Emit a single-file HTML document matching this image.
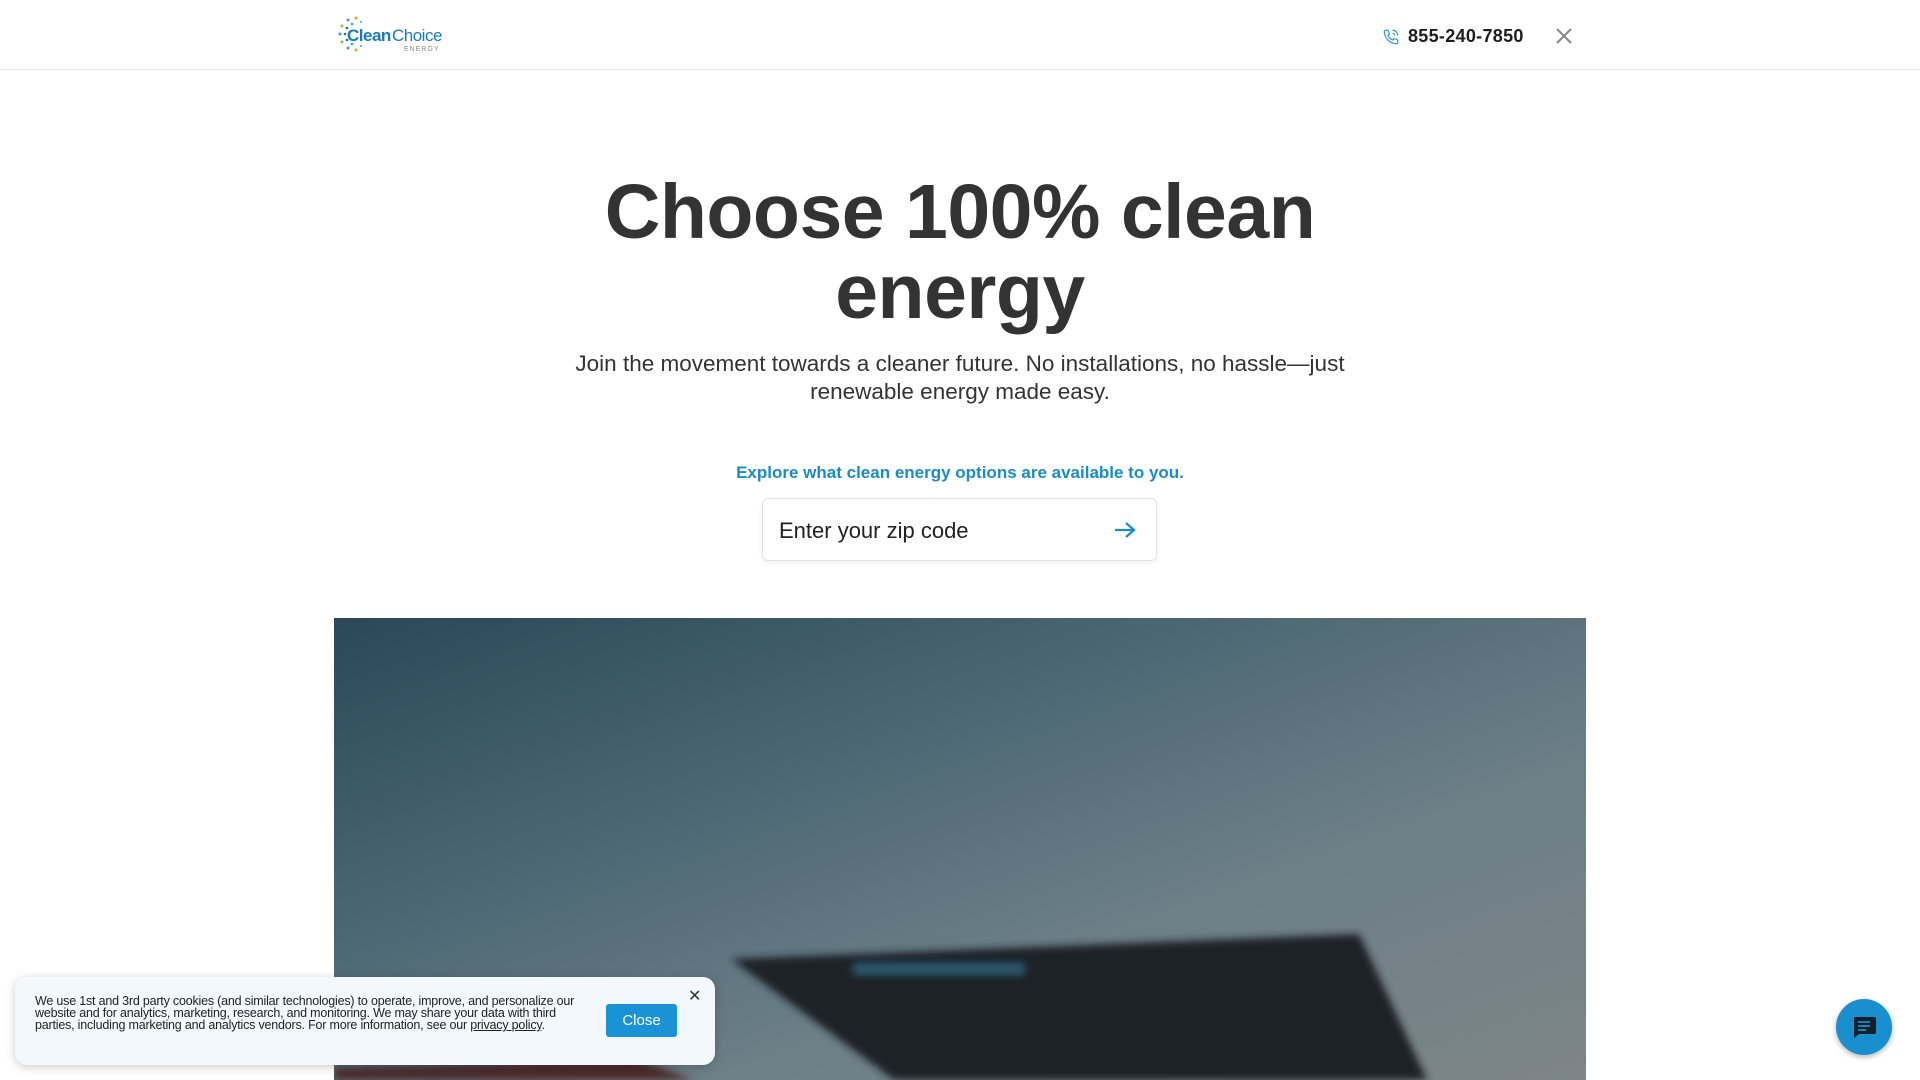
<!DOCTYPE html>
<html><head><meta charset="utf-8"><style>
*{margin:0;padding:0;box-sizing:border-box}
body{width:1920px;height:1080px;overflow:hidden;background:#fff;font-family:"Liberation Sans",sans-serif;color:#2b2b2b;position:relative}
.hdr{position:absolute;left:0;top:0;width:1920px;height:70px;border-bottom:1px solid #e6e6e6}
.logo{position:absolute;left:334px;top:14px}
.phone{position:absolute;left:1382px;top:26px;display:flex;align-items:center;gap:8px;font-size:18px;font-weight:bold;color:#1d1d1d;letter-spacing:.3px}
.x{position:absolute;left:1555px;top:27px}
h1{position:absolute;left:0;width:1920px;top:172px;text-align:center;font-size:77px;line-height:80px;font-weight:bold;color:#333;letter-spacing:-0.5px}
.sub{position:absolute;left:0;width:1920px;top:350px;text-align:center;font-size:22.5px;line-height:28px;color:#333}
.exp{position:absolute;left:0;width:1920px;top:463px;text-align:center;font-size:17px;color:#1a8cc4;font-weight:bold}
.inp{position:absolute;left:762px;top:498px;width:395px;height:63px;border:1px solid #e2e2e2;border-radius:6px;box-shadow:0 2px 6px rgba(0,0,0,.06)}
.inp span{position:absolute;left:16px;top:19px;font-size:22px;color:#222}
.inp svg{position:absolute;right:20px;top:22px}
.img{position:absolute;left:334px;top:618px;width:1252px;height:462px;overflow:hidden;background:linear-gradient(160deg,#2a4858 0%,#4c6774 35%,#6d7f87 65%,#7d8589 100%)}
.ck{position:absolute;left:15px;top:977px;width:700px;height:88px;background:#f2f8fc;border-radius:12px;box-shadow:0 2px 10px rgba(0,0,0,.2)}
.ck p{position:absolute;left:20px;top:18px;width:540px;font-size:12.5px;line-height:12px;color:#222;letter-spacing:-0.2px}
.ck .b{position:absolute;left:591px;top:27px;width:71px;height:33px;background:#1a93d6;color:#fff;border-radius:3px;font-size:15px;text-align:center;line-height:33px}
.ck .c{position:absolute;left:673px;top:9px;font-size:16px;color:#333}
.chat{position:absolute;left:1836px;top:999px;width:56px;height:56px;border-radius:50%;background:#1a8fd0;box-shadow:0 2px 6px rgba(0,0,0,.3)}
</style></head><body>
<div class="hdr">
<div class="logo"><svg width="112" height="40" viewBox="0 0 112 40">
<g fill="#3aa0c8"><circle cx="6" cy="20" r="1.5"/><circle cx="8" cy="12" r="1.5" fill="#8bc34a"/><circle cx="14" cy="6" r="1.5"/><circle cx="22" cy="4" r="1.5" fill="#f0a030"/><circle cx="8" cy="28" r="1.5" fill="#8bc34a"/><circle cx="14" cy="34" r="1.5"/><circle cx="22" cy="36" r="1.5" fill="#f0a030"/><circle cx="11" cy="20" r="1.3" fill="#1b6fa8"/><circle cx="13" cy="14" r="1.3" fill="#1b6fa8"/><circle cx="13" cy="26" r="1.3" fill="#1b6fa8"/><circle cx="18" cy="10" r="1.3"/><circle cx="18" cy="30" r="1.3"/><circle cx="27" cy="8" r="1"/><circle cx="27" cy="32" r="1"/></g>
<text x="13" y="27" font-family="Liberation Sans" font-weight="bold" font-size="17" fill="#1b7ab5" letter-spacing="-0.5">Clean</text>
<text x="58" y="27" font-family="Liberation Sans" font-size="17" fill="#1b7ab5" letter-spacing="-0.5">Choice</text>
<text x="70" y="37" font-family="Liberation Sans" font-size="7" fill="#888" letter-spacing="1">ENERGY</text></svg></div>
<div class="phone"><svg width="18" height="18" viewBox="0 0 24 24" fill="none" stroke="#2a9ad0" stroke-width="1.6"><path d="M5 3h3l2 5-2 1.5a11 11 0 0 0 6.5 6.5L16 14l5 2v3a2 2 0 0 1-2 2A17 17 0 0 1 3 5a2 2 0 0 1 2-2z"/><path d="M14 3a7 7 0 0 1 7 7M14 7a3 3 0 0 1 3 3"/></svg>855-240-7850</div>
<div class="x"><svg width="18" height="18" viewBox="0 0 18 18" stroke="#888" stroke-width="2"><path d="M2 2l14 14M16 2L2 16"/></svg></div>
</div>
<h1>Choose 100% clean<br>energy</h1>
<div class="sub">Join the movement towards a cleaner future. No installations, no hassle—just<br>renewable energy made easy.</div>
<div class="exp">Explore what clean energy options are available to you.</div>
<div class="inp"><span>Enter your zip code</span><svg width="22" height="18" viewBox="0 0 22 18" fill="none" stroke="#1a8cc4" stroke-width="2.2"><path d="M1 9h19M12 2l8 7-8 7"/></svg></div>
<div class="img"><svg width="1252" height="462" style="position:absolute;left:0;top:0"><defs><filter id="bl"><feGaussianBlur stdDeviation="4"/></filter></defs>
<g filter="url(#bl)"><polygon points="397,341 1025,316 1093,462 560,462" fill="#1a2028"/><rect x="520" y="346" width="170" height="10" fill="#2d5a70"/><polygon points="0,450 300,440 360,462 0,462" fill="#4a2a2a"/></g></svg></div>
<div class="ck"><p>We use 1st and 3rd party cookies (and similar technologies) to operate, improve, and personalize our website and for analytics, marketing, research, and monitoring. We may share your data with third parties, including marketing and analytics vendors. For more information, see our <u>privacy policy</u>.</p><div class="b">Close</div><div class="c">✕</div></div>
<div class="chat"><svg width="56" height="56" viewBox="0 0 56 56"><path d="M18 18h20a2 2 0 0 1 2 2v13a2 2 0 0 1-2 2H23l-5 4z" fill="#12202c"/><path d="M22 23h12M22 27h12M22 31h8" stroke="#1a8fd0" stroke-width="1.8"/></svg></div>
</body></html>
